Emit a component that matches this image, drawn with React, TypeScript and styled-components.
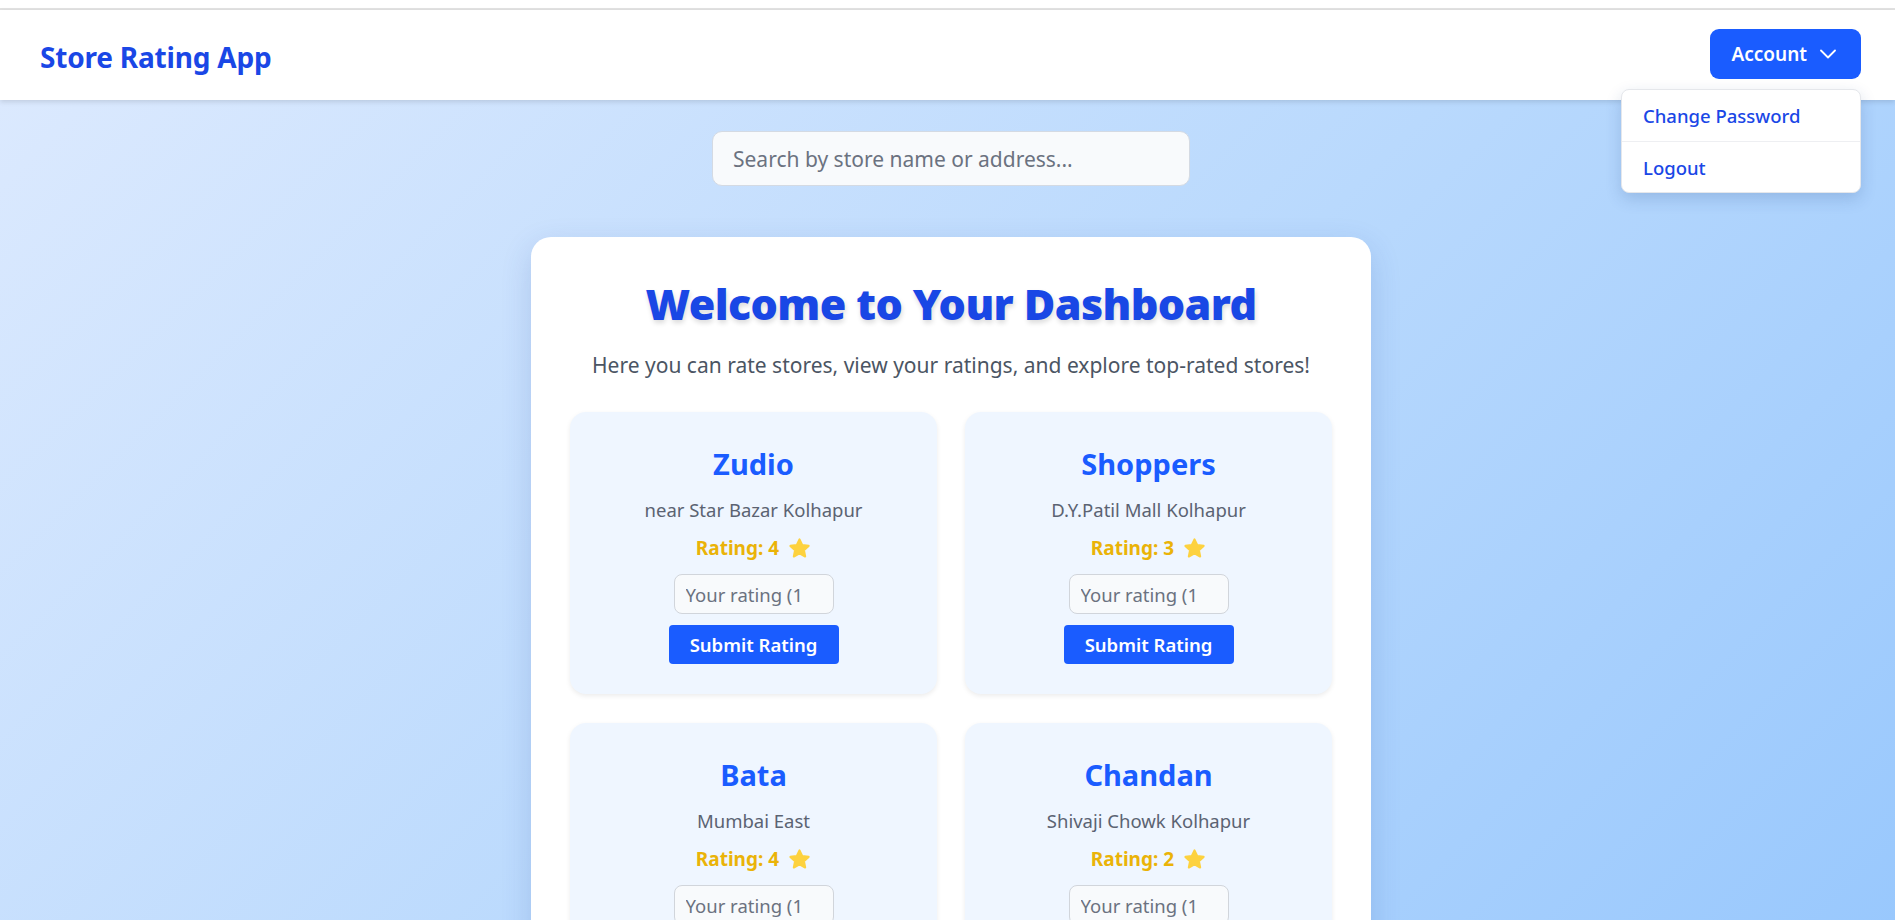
import React, { FunctionComponent, useState } from 'react';
import styled, { createGlobalStyle } from 'styled-components';

const GlobalStyle = createGlobalStyle`
  * {
    box-sizing: border-box;
  }

  body {
    margin: 0;
    font-family: 'Noto Sans', 'Open Sans', sans-serif;
    background: #ffffff;
  }
`;

const TopStrip = styled.div`
  height: 10px;
  background: #ffffff;
  border-bottom: 2px solid #e2e2e2;
`;

const NavBar = styled.header`
  position: relative;
  z-index: 10;
  height: 90px;
  display: flex;
  align-items: center;
  justify-content: space-between;
  padding: 0 34px 0 40px;
  background: #ffffff;
  box-shadow: 0 2px 5px 0 rgba(0, 0, 0, 0.12);
`;

const Brand = styled.h1`
  margin: 4px 0 0;
  font-size: 28px;
  font-weight: 700;
  color: #1a47e6;
  letter-spacing: -0.2px;
`;

const AccountWrapper = styled.div`
  position: relative;
  margin-top: -2px;
`;

const AccountButton = styled.button`
  display: flex;
  align-items: center;
  gap: 13px;
  height: 50px;
  padding: 0 25px 0 21px;
  border: none;
  border-radius: 9px;
  background: #1a5cff;
  color: #ffffff;
  font-family: inherit;
  font-size: 19px;
  font-weight: 600;
  cursor: pointer;
`;

const Menu = styled.div`
  position: absolute;
  top: 60px;
  right: 0;
  width: 240px;
  background: #ffffff;
  border: 1px solid #e5e7eb;
  border-radius: 8px;
  box-shadow: 0 6px 16px rgba(30, 60, 120, 0.18);
  overflow: hidden;
`;

const MenuItem = styled.button`
  display: block;
  width: 100%;
  height: 51px;
  padding: 0 21px;
  border: none;
  background: none;
  text-align: left;
  font-family: inherit;
  font-size: 18.5px;
  font-weight: 500;
  color: #1a47e6;
  cursor: pointer;

  & + & {
    border-top: 1px solid #eeeff2;
  }
`;

const Main = styled.main`
  display: flex;
  flex-direction: column;
  align-items: center;
  min-height: calc(100vh - 100px);
  padding: 31px 0 40px 7px;
  background: linear-gradient(135deg, #dbe9fe 0%, #b9d9fd 50%, #95c6fd 100%);
`;

const SearchInput = styled.input`
  width: 478px;
  height: 55px;
  padding: 0 20px;
  border: 1px solid #d4dae3;
  border-radius: 10px;
  background: #f8fafc;
  font-family: inherit;
  font-size: 21px;
  color: #1f2937;
  outline: none;

  &::placeholder {
    color: #6b7280;
  }
`;

const DashboardCard = styled.section`
  width: 840px;
  margin-top: 51px;
  padding: 41px 39px 40px;
  background: #ffffff;
  border-radius: 20px;
  box-shadow: 0 10px 30px rgba(40, 80, 160, 0.18);
  text-align: center;
`;

const Heading = styled.h2`
  margin: 0;
  font-size: 43px;
  line-height: 52px;
  font-weight: 900;
  color: #1947e5;
  letter-spacing: -0.6px;
  text-shadow: 1px 3px 5px rgba(0, 0, 0, 0.14);
`;

const Subtitle = styled.p`
  margin: 21px 0 0;
  font-size: 21px;
  line-height: 28px;
  color: #4b5563;
`;

const StoreGrid = styled.div`
  display: grid;
  grid-template-columns: 1fr 1fr;
  gap: 29px 28px;
  margin-top: 33px;
`;

const StoreCard = styled.div`
  display: flex;
  flex-direction: column;
  align-items: center;
  height: 282px;
  padding: 34px 20px 30px;
  background: #eff6ff;
  border-radius: 16px;
  box-shadow: 0 2px 5px rgba(0, 0, 0, 0.08);
`;

const StoreName = styled.h3`
  margin: 0;
  font-size: 29px;
  line-height: 36px;
  font-weight: 700;
  color: #1a5cff;
`;

const StoreAddress = styled.p`
  margin: 15px 0 0;
  font-size: 18.5px;
  line-height: 26px;
  color: #5b6372;
`;

const RatingLine = styled.div`
  display: flex;
  align-items: center;
  gap: 9px;
  margin-top: 12px;
  font-size: 19px;
  line-height: 26px;
  font-weight: 700;
  color: #eab308;
`;

const RatingInput = styled.input`
  width: 160px;
  height: 42px;
  margin-top: 13px;
  padding: 0 16px 0 11px;
  border: 1px solid #d1d5db;
  border-radius: 8px;
  background: #f8fafc;
  font-family: inherit;
  font-size: 18.5px;
  outline: none;

  &::placeholder {
    color: #6b7280;
  }
`;

const SubmitButton = styled.button`
  width: 170px;
  height: 40px;
  margin-top: 11px;
  border: none;
  border-radius: 4px;
  background: #1a5cff;
  color: #ffffff;
  font-family: inherit;
  font-size: 18.5px;
  font-weight: 600;
  cursor: pointer;
`;

const Chevron = () => (
  <svg width="16" height="10" viewBox="0 0 16 10" fill="none">
    <polyline points="1,1.5 8,8.5 15,1.5" stroke="#ffffff" strokeWidth="1.8" strokeLinecap="round" strokeLinejoin="round" />
  </svg>
);

const Star = () => (
  <svg width="23" height="23" viewBox="0 0 24 24">
    <path
      d="M12 2.5l2.9 6 6.6.8-4.9 4.5 1.3 6.5L12 17.1l-5.9 3.2 1.3-6.5-4.9-4.5 6.6-.8z"
      fill="#fdd23f"
      stroke="#fdd23f"
      strokeWidth="2.2"
      strokeLinejoin="round"
    />
  </svg>
);

type Store = {
  name: string;
  address: string;
  rating: number;
};

const stores: Store[] = [
  { name: 'Zudio', address: 'near Star Bazar Kolhapur', rating: 4 },
  { name: 'Shoppers', address: 'D.Y.Patil Mall Kolhapur', rating: 3 },
  { name: 'Bata', address: 'Mumbai East', rating: 4 },
  { name: 'Chandan', address: 'Shivaji Chowk Kolhapur', rating: 2 },
];

const App: FunctionComponent = () => {
  const [menuOpen, setMenuOpen] = useState(true);
  const [search, setSearch] = useState('');

  const visible = stores.filter(
    s =>
      s.name.toLowerCase().includes(search.toLowerCase()) ||
      s.address.toLowerCase().includes(search.toLowerCase()),
  );

  return (
    <>
      <GlobalStyle />
      <TopStrip />
      <NavBar>
        <Brand>Store Rating App</Brand>
        <AccountWrapper>
          <AccountButton onClick={() => setMenuOpen(open => !open)}>
            Account
            <Chevron />
          </AccountButton>
          {menuOpen && (
            <Menu>
              <MenuItem>Change Password</MenuItem>
              <MenuItem>Logout</MenuItem>
            </Menu>
          )}
        </AccountWrapper>
      </NavBar>
      <Main>
        <SearchInput
          placeholder="Search by store name or address..."
          value={search}
          onChange={e => setSearch(e.target.value)}
        />
        <DashboardCard>
          <Heading>Welcome to Your Dashboard</Heading>
          <Subtitle>Here you can rate stores, view your ratings, and explore top-rated stores!</Subtitle>
          <StoreGrid>
            {visible.map(store => (
              <StoreCard key={store.name}>
                <StoreName>{store.name}</StoreName>
                <StoreAddress>{store.address}</StoreAddress>
                <RatingLine>
                  Rating: {store.rating}
                  <Star />
                </RatingLine>
                <RatingInput type="number" placeholder="Your rating (1-5)" />
                <SubmitButton>Submit Rating</SubmitButton>
              </StoreCard>
            ))}
          </StoreGrid>
        </DashboardCard>
      </Main>
    </>
  );
};

export default App;
